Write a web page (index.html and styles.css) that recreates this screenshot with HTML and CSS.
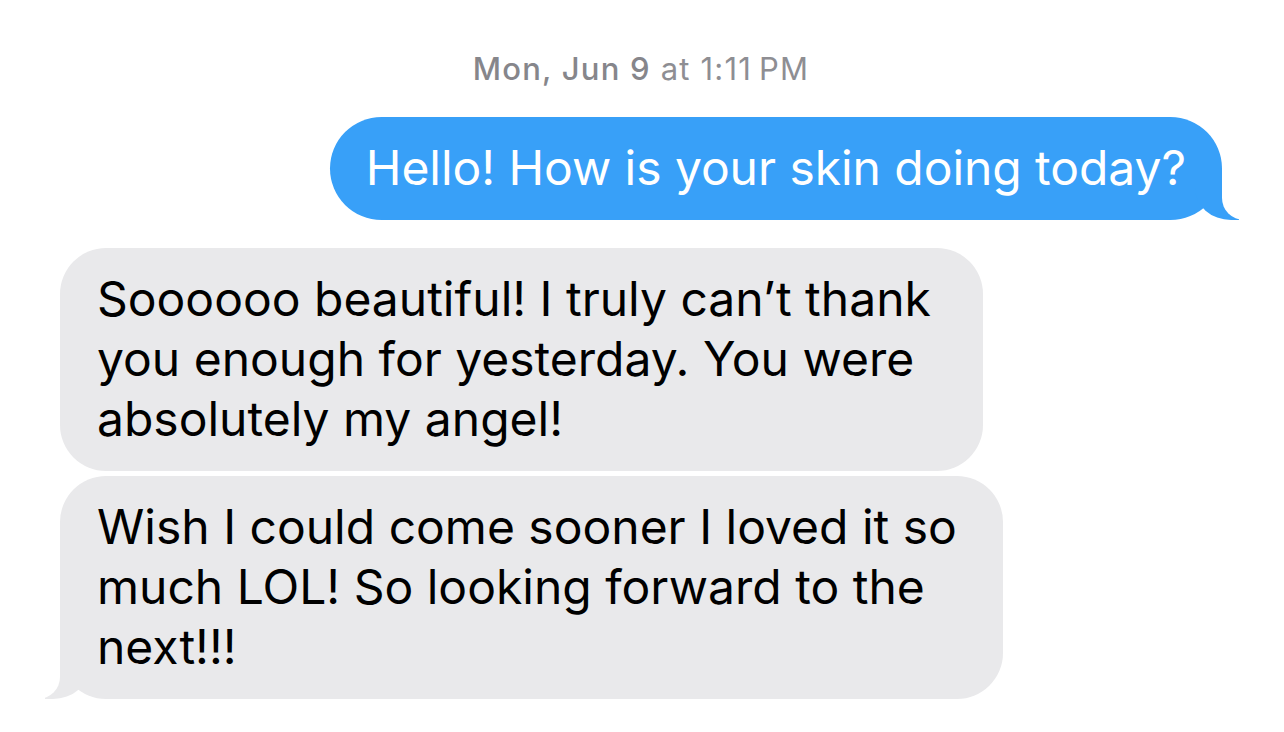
FILE: index.html
```html
<!DOCTYPE html>
<html lang="en">
<head>
<meta charset="UTF-8" />
<title>Messages</title>
<link rel="stylesheet" href="styles.css">
</head>
<body>
  <div class="thread">
    <div class="timestamp"><span class="day">Mon, Jun 9</span> at 1:11&#8201;PM</div>

    <div class="row row-sent">
      <div class="bubble sent tail">Hello! How is your skin doing today?</div>
    </div>

    <div class="row row-received">
      <div class="bubble received first">Soooooo beautiful! I truly can’t thank<br>you enough for yesterday. You were<br>absolutely my angel!</div>
      <div class="bubble received second tail">Wish I could come sooner I loved it so<br>much LOL! So looking forward to the<br>next!!!</div>
    </div>
  </div>
</body>
</html>
```

FILE: styles.css
```css
body {
  margin: 0;
  background: #fff;
  font-family: Inter, "Liberation Sans", Arial, sans-serif;
  overflow: hidden;
}

.thread {
  display: flex;
  flex-direction: column;
  padding: 48px 62px 0 60px;
}

.timestamp {
  text-align: center;
  color: #8e8e93;
  font-size: 31px;
  letter-spacing: 1.2px;
  line-height: 42px;
  margin-bottom: 27px;
}

.timestamp .day {
  font-weight: 500;
  color: #86868b;
}

.row {
  display: flex;
  flex-direction: column;
  gap: 5px;
}

.row-sent {
  align-items: flex-end;
  margin-bottom: 28px;
}

.row-received {
  align-items: flex-start;
}

.bubble {
  position: relative;
  font-size: 48px;
  line-height: 60px;
  padding: 21px 37px 22px 37px;
  border-radius: 46px;
  box-sizing: border-box;
}

.sent {
  background: #38a0f8;
  color: #fff;
  border-radius: 52px;
  padding-left: 36px;
  padding-right: 36px;
  letter-spacing: -0.05px;
}

.received {
  background: #e9e9eb;
  color: #000;
}

.first { width: 923px; }
.second { width: 943px; }

/* bubble tails */
.tail::before,
.tail::after {
  content: "";
  position: absolute;
  bottom: 0;
  height: 52px;
}

.sent.tail::before {
  right: -17px;
  width: 44px;
  background: #38a0f8;
  border-bottom-left-radius: 36px 32px;
}

.sent.tail::after {
  right: -56px;
  width: 56px;
  background: #fff;
  border-bottom-left-radius: 22px;
}

.received.tail::before {
  left: -15px;
  width: 44px;
  background: #e9e9eb;
  border-bottom-right-radius: 36px 32px;
}

.received.tail::after {
  left: -56px;
  width: 56px;
  background: #fff;
  border-bottom-right-radius: 22px;
}
```
